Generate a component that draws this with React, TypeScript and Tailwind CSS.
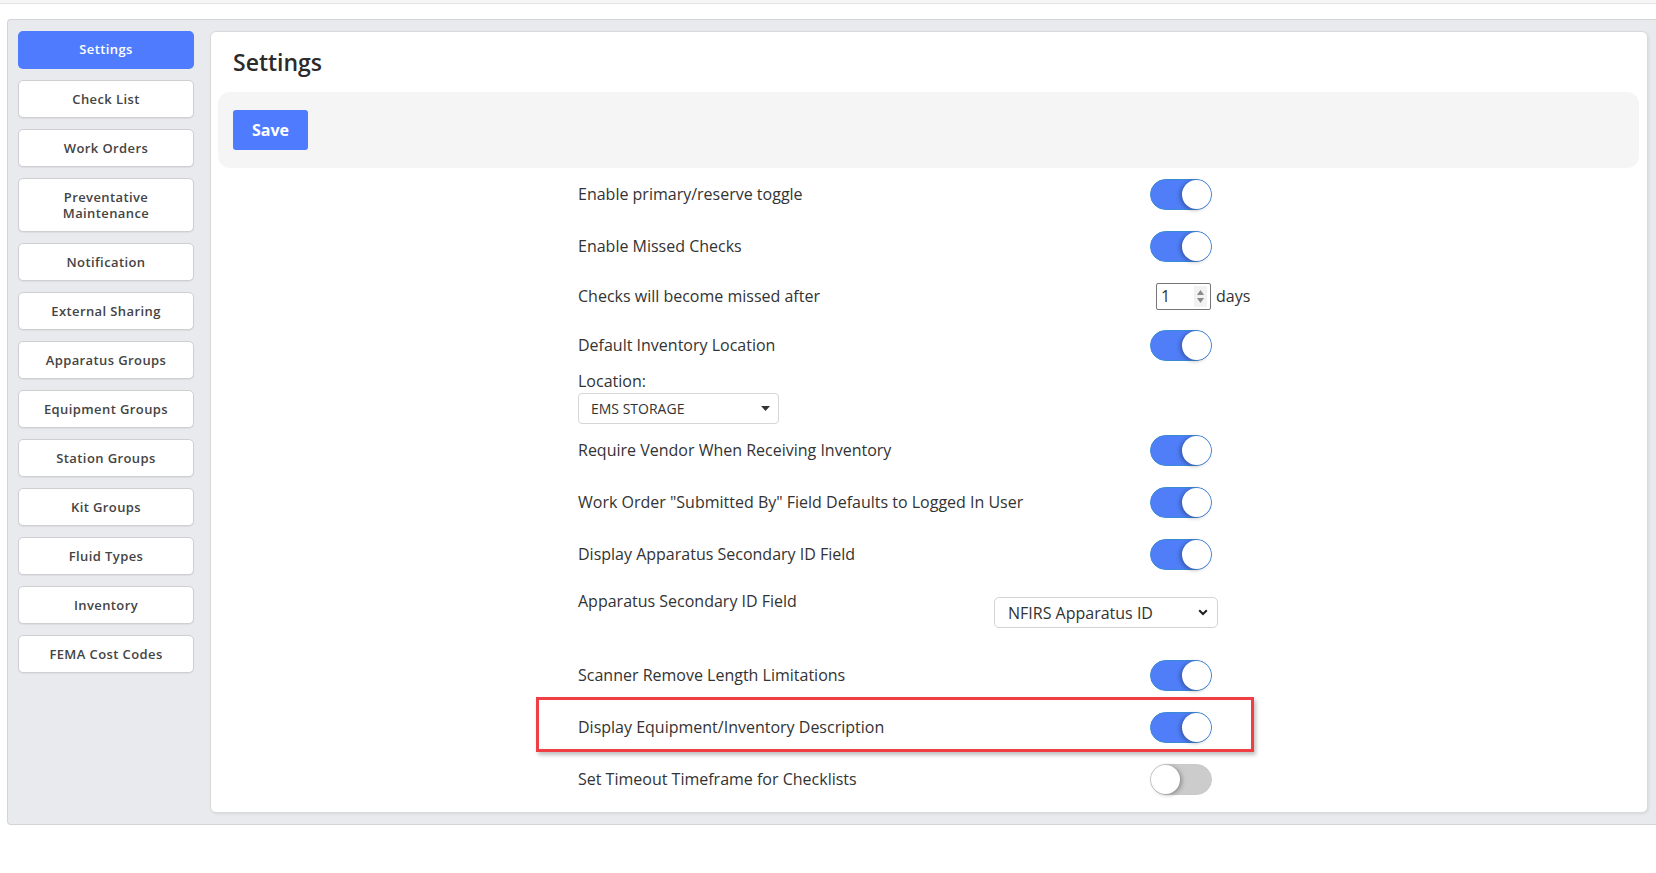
import React from 'react';

const NAV = [
  'Settings',
  'Check List',
  'Work Orders',
  'Preventative Maintenance',
  'Notification',
  'External Sharing',
  'Apparatus Groups',
  'Equipment Groups',
  'Station Groups',
  'Kit Groups',
  'Fluid Types',
  'Inventory',
  'FEMA Cost Codes',
];

const Toggle: React.FC<{ on?: boolean }> = ({ on = true }) => (
  <div
    className={`relative h-[31px] w-[62px] rounded-full border ${
      on ? 'border-[#3a8ad6] bg-[#4f7ef8]' : 'border-[#c9c9c9] bg-[#cccccc]'
    }`}
  >
    <div
      className={`absolute top-[0px] h-[29px] w-[29px] rounded-full bg-white ${
        on
          ? 'right-[0px] shadow-[-2px_1px_4px_rgba(0,0,0,0.3)]'
          : 'left-[0px] shadow-[2px_1px_4px_rgba(0,0,0,0.3)]'
      }`}
    />
  </div>
);

const ToggleRow: React.FC<{ label: string; on?: boolean; children?: React.ReactNode }> = ({
  label,
  on = true,
  children,
}) => (
  <div className="relative flex h-[52px] items-center">
    <div className="w-[572px] text-[16px] leading-[22px] text-[#333]">{label}</div>
    <Toggle on={on} />
    {children}
  </div>
);

export default function App() {
  return (
    <div className="min-h-screen bg-white font-['Open_Sans',sans-serif]">
      <div className="h-[4px] border-b border-[#e2e2e2] bg-[#f6f6f6]" />

      <div className="ml-[7px] mt-[15px] flex h-[806px] gap-[16px] rounded-l-[4px] border border-r-0 border-[#d3d4d8] bg-[#e9eaee] pl-[10px] pr-[8px] pt-[11px]">
        {/* Sidebar */}
        <div className="flex w-[176px] shrink-0 flex-col gap-[11px]">
          {NAV.map((item, i) =>
            i === 0 ? (
              <div
                key={item}
                className="flex h-[38px] items-center justify-center rounded-[5px] bg-[#4f7cff] text-[13px] font-semibold tracking-[0.4px] text-white"
              >
                {item}
              </div>
            ) : (
              <div
                key={item}
                className={`flex ${
                  item === 'Preventative Maintenance' ? 'h-[54px] px-8' : 'h-[38px] px-2'
                } items-center justify-center rounded-[5px] border border-[#cfcfd2] bg-white text-center text-[13px] font-semibold leading-[16px] tracking-[0.4px] text-[#444] shadow-[0_1px_1px_rgba(0,0,0,0.06)]`}
              >
                {item}
              </div>
            )
          )}
        </div>

        {/* Content card */}
        <div className="h-[782px] flex-1 rounded-[6px] border border-[#d9d9d9] bg-white shadow-[1px_1px_3px_rgba(0,0,0,0.08)]">
          <div className="flex h-[60px] items-center pl-[22px] text-[23px] font-semibold text-[#2b2b2b]">
            Settings
          </div>

          <div className="ml-[7px] mr-[8px] flex h-[76px] items-center rounded-[12px] bg-[#f5f5f5] px-[15px]">
            <button className="h-[40px] w-[75px] rounded-[3px] bg-[#4f7bff] text-[16px] font-bold text-white">
              Save
            </button>
          </div>

          <div className="pl-[367px]">
            <ToggleRow label="Enable primary/reserve toggle" />
            <ToggleRow label="Enable Missed Checks" />

            <div className="flex h-[48px] items-center">
              <div className="w-[578px] text-[16px] leading-[22px] text-[#333]">
                Checks will become missed after
              </div>
              <div className="flex h-[27px] w-[55px] items-center justify-between rounded-[2px] border border-[#767676] pl-[4px] pr-[3px] text-[16px] text-[#333]">
                <span>1</span>
                <div className="flex h-[21px] w-[13px] flex-col items-center justify-center gap-[3px] bg-[#f2f2f2]">
                  <svg width="7" height="5" viewBox="0 0 7 5">
                    <path d="M3.5 0 L7 5 L0 5 Z" fill="#8a8a8a" />
                  </svg>
                  <svg width="7" height="5" viewBox="0 0 7 5">
                    <path d="M0 0 L7 0 L3.5 5 Z" fill="#8a8a8a" />
                  </svg>
                </div>
              </div>
              <span className="ml-[5px] text-[16px] text-[#333]">days</span>
            </div>

            <div className="flex h-[50px] items-center">
              <div className="w-[572px] text-[16px] leading-[22px] text-[#333]">
                Default Inventory Location
              </div>
              <Toggle />
            </div>

            <div className="text-[16px] leading-[22px] text-[#333]">Location:</div>
            <div className="mt-[1px] flex h-[31px] w-[201px] items-center justify-between rounded-[4px] border border-[#d6d6d6] pl-[12px] pr-[8px] text-[14px] text-[#333]">
              <span>EMS STORAGE</span>
              <svg width="9" height="5" viewBox="0 0 9 5">
                <path d="M0 0 L9 0 L4.5 5 Z" fill="#333" />
              </svg>
            </div>

            <ToggleRow label="Require Vendor When Receiving Inventory" />
            <ToggleRow label='Work Order "Submitted By" Field Defaults to Logged In User' />
            <ToggleRow label="Display Apparatus Secondary ID Field" />

            <div className="flex h-[69px]">
              <div className="w-[416px] pt-[10px] text-[16px] leading-[22px] text-[#333]">
                Apparatus Secondary ID Field
              </div>
              <div className="mt-[17px] flex h-[31px] w-[224px] items-center justify-between rounded-[5px] border border-[#d4d4d4] pl-[13px] pr-[9px] text-[16px] text-[#333]">
                <span>NFIRS Apparatus ID</span>
                <svg width="10" height="7" viewBox="0 0 10 7">
                  <path d="M1.2 1.2 L5 5 L8.8 1.2" fill="none" stroke="#222" strokeWidth="2" />
                </svg>
              </div>
            </div>

            <ToggleRow label="Scanner Remove Length Limitations" />
            <div className="relative">
              <ToggleRow label="Display Equipment/Inventory Description" />
              <div className="pointer-events-none absolute left-[-42px] top-[-4px] h-[55px] w-[718px] border-[3px] border-[#f03e45] shadow-[2px_3px_4px_rgba(0,0,0,0.25)]" />
            </div>
            <ToggleRow label="Set Timeout Timeframe for Checklists" on={false} />
          </div>
        </div>
      </div>
    </div>
  );
}
